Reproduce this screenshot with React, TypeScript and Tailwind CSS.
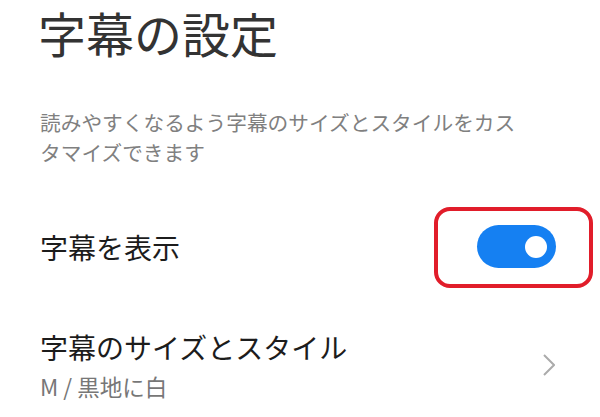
import React, { useState } from 'react';

const Toggle = ({ on, onChange }: { on: boolean; onChange: () => void }) => (
  <button
    type="button"
    onClick={onChange}
    className={`relative flex h-[43px] w-[79px] items-center rounded-full px-[9px] ${on ? 'justify-end bg-[#1580f2]' : 'justify-start bg-[#c8c8c8]'}`}
  >
    <span className="block h-[22px] w-[22px] rounded-full bg-white" />
    {/* annotation frame */}
    <span className="pointer-events-none absolute -left-[43px] -right-[37px] -top-[18px] -bottom-[20px] rounded-[16px] border-[4px] border-[#e11d2a]" />
  </button>
);

export default function App() {
  const [showSubs, setShowSubs] = useState(true);

  return (
    <div className="min-h-[417px] w-[600px] bg-white pl-[40px] pr-[44px] pt-[2px] font-['Noto_Sans_CJK_JP','Noto_Sans',sans-serif]">
      <h1 className="-ml-[2px] text-[48px] font-normal leading-[60px] text-[#333333]">字幕の設定</h1>

      <p className="mt-[45px] max-w-[490px] text-[20.7px] leading-[30px] text-[#808080]">
        読みやすくなるよう字幕のサイズとスタイルをカスタマイズできます
      </p>

      {/* Show subtitles */}
      <div className="mt-[58px] flex items-center justify-between">
        <span className="text-[28px] leading-[40px] text-[#1c1c1c]">字幕を表示</span>
        <Toggle on={showSubs} onChange={() => setShowSubs(!showSubs)} />
      </div>

      {/* Size & style */}
      <div className="mt-[61px] flex items-center justify-between">
        <div>
          <div className="text-[28px] leading-[36px] text-[#1c1c1c]">字幕のサイズとスタイル</div>
          <div className="mt-[6px] text-[22.5px] leading-[30px] text-[#777777]">M / 黒地に白</div>
        </div>
        <svg width="12" height="22" viewBox="0 0 12 22" fill="none" className="mr-[1px]">
          <path d="M1 1L11 11L1 21" stroke="#ababab" strokeWidth="2" />
        </svg>
      </div>
    </div>
  );
}
